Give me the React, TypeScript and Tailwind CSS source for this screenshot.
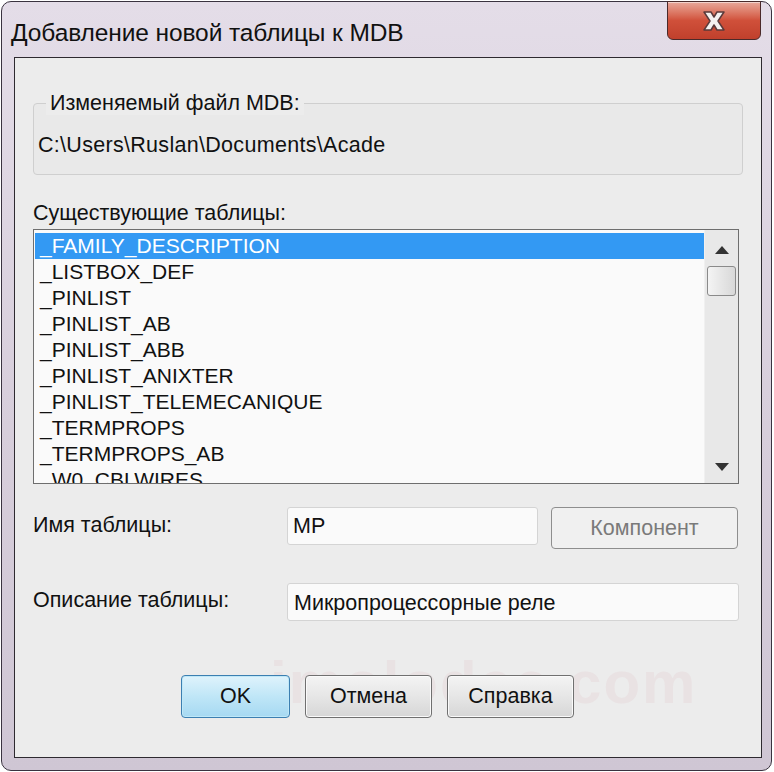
import React from "react";

const tables = [
  "_FAMILY_DESCRIPTION",
  "_LISTBOX_DEF",
  "_PINLIST",
  "_PINLIST_AB",
  "_PINLIST_ABB",
  "_PINLIST_ANIXTER",
  "_PINLIST_TELEMECANIQUE",
  "_TERMPROPS",
  "_TERMPROPS_AB",
  "_W0_CBLWIRES",
];

const font = { fontFamily: '"Liberation Sans", Arial, sans-serif' };

export default function App() {
  return (
    <div className="w-[774px] h-[772px] bg-white relative overflow-hidden" style={font}>
      {/* Window frame */}
      <div className="absolute left-[1px] top-[1px] w-[771px] h-[770px] rounded-[10px] border border-[#3a3340] bg-gradient-to-b from-[#e4dde8] via-[#d8cfdc] to-[#cfc6d4] flex flex-col">
        {/* Title bar */}
        <div className="h-[55px] flex items-start relative shrink-0">
          <span className="ml-[9px] mt-[13px] text-[24.5px] text-[#111] tracking-[-0.1px]">
            Добавление новой таблицы к MDB
          </span>
          <div className="absolute right-[10px] top-[-1px] w-[94px] h-[39px] rounded-b-[6px] border border-[#4a2a2a] bg-gradient-to-b from-[#e8a89a] via-[#d0503a] to-[#c0402c] flex items-center justify-center shadow-[inset_0_1px_0_rgba(255,255,255,0.5)]">
            <svg width="28" height="24" viewBox="0 0 28 24">
              <path
                d="M4 3 L11 3 L14 8 L17 3 L24 3 L18 12 L24 21 L17 21 L14 16 L11 21 L4 21 L10 12 Z"
                fill="#f4f2f0"
                stroke="#5a3a3a"
                strokeWidth="1.5"
                strokeLinejoin="round"
              />
            </svg>
          </div>
        </div>

        {/* Client area */}
        <div className="ml-[12px] mr-[9px] mb-[12px] flex-1 border border-[#2e2a30] bg-[#ececec] relative flex flex-col pl-[18px] text-[21.5px] text-[#111]">
          {/* Watermark */}
          <div className="absolute left-[255px] top-[580px] text-[60px] font-bold text-[#e9e2e3] tracking-[2px] pointer-events-none select-none">
            imolodec.com
          </div>

          {/* Group box */}
          <div className="mt-[45px] w-[710px] h-[72px] rounded-[4px] border border-[#cfcfcf] relative bg-[#e9e9e9]">
            <span className="absolute left-[12px] top-[-13px] px-[4px] bg-[#ececec] leading-[24px]">
              Изменяемый файл MDB:
            </span>
            <div className="mt-[29px] ml-[4px] leading-[24px] tracking-[0.3px]">C:\Users\Ruslan\Documents\Acade</div>
          </div>

          <div className="mt-[26px] leading-[24px]">Существующие таблицы:</div>

          {/* List box */}
          <div className="mt-[4px] w-[706px] h-[255px] border border-[#6e6e6e] bg-[#fafafa] flex overflow-hidden text-[21px]">
            <div className="flex-1 pt-[3px] pl-[1px]">
              {tables.map((t, i) => (
                <div
                  key={t}
                  className={`h-[26px] leading-[26px] pl-[5px] ${
                    i === 0 ? "bg-[#3399f3] text-white" : "text-[#111]"
                  }`}
                >
                  {t}
                </div>
              ))}
            </div>
            <div className="w-[34px] bg-[#e8e8e8] border-l border-[#f0f0f0] flex flex-col items-center pt-[3px]">
              <div className="h-[33px] flex items-center justify-center">
                <svg width="14" height="8" viewBox="0 0 14 8">
                  <path d="M7 0 L14 8 L0 8 Z" fill="#333" />
                </svg>
              </div>
              <div className="w-[29px] h-[30px] rounded-[3px] border border-[#8a8a8a] bg-gradient-to-r from-[#f4f4f4] to-[#d8d8d8]" />
              <div className="flex-1" />
              <div className="h-[33px] flex items-center justify-center">
                <svg width="14" height="8" viewBox="0 0 14 8">
                  <path d="M0 0 L14 0 L7 8 Z" fill="#333" />
                </svg>
              </div>
            </div>
          </div>

          {/* Name row */}
          <div className="mt-[23px] flex items-start relative">
            <div className="w-[254px] mt-[6px] leading-[24px]">Имя таблицы:</div>
            <div className="w-[251px] h-[38px] rounded-[3px] border border-[#d4d4d4] bg-[#fafafa] pl-[5px] leading-[36px]">
              MP
            </div>
            <div className="ml-[13px] w-[187px] h-[42px] rounded-[4px] border border-[#8e8e8e] bg-[#f0f0f0] flex items-center justify-center text-[#7a7a7a]">
              Компонент
            </div>
          </div>

          {/* Description row */}
          <div className="mt-[34px] flex items-start relative">
            <div className="w-[254px] mt-[5px] leading-[24px]">Описание таблицы:</div>
            <div className="w-[452px] h-[38px] rounded-[3px] border border-[#d4d4d4] bg-[#fafafa] pl-[6px] leading-[38px]">
              Микропроцессорные реле
            </div>
          </div>

          {/* Buttons */}
          <div className="mt-[54px] ml-[148px] flex gap-[15px] relative">
            <div className="w-[109px] h-[43px] rounded-[4px] border border-[#3c7fb1] bg-gradient-to-b from-[#dff3fc] via-[#bfe6f7] to-[#a6d9f2] shadow-[inset_0_0_0_1px_#bfe8f8] flex items-center justify-center">
              OK
            </div>
            <div className="w-[127px] h-[43px] rounded-[4px] border border-[#707070] bg-gradient-to-b from-[#f4f4f4] via-[#e6e6e6] to-[#d6d6d6] shadow-[inset_0_0_0_1px_#fafafa] flex items-center justify-center">
              Отмена
            </div>
            <div className="w-[127px] h-[43px] rounded-[4px] border border-[#707070] bg-gradient-to-b from-[#f4f4f4] via-[#e6e6e6] to-[#d6d6d6] shadow-[inset_0_0_0_1px_#fafafa] flex items-center justify-center">
              Справка
            </div>
          </div>
        </div>
      </div>
    </div>
  );
}
